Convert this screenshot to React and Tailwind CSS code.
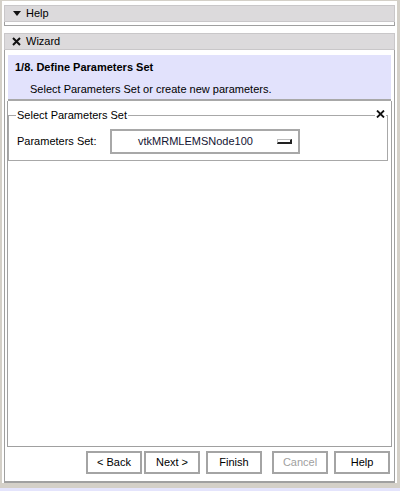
const Btn = ({ children, disabled }) => (
  <button
    disabled={disabled}
    className={`w-[56px] h-[23px] bg-white border-2 border-[#a4a4a4] text-[11px] leading-none ${disabled ? 'text-[#a0a0a0]' : 'text-black'}`}
  >
    {children}
  </button>
)

const Bar = ({ icon, label }) => (
  <div className="h-[17px] bg-[#dcdadc] border border-[#c9c7c9] flex items-center">
    <span className="w-[21px] flex justify-center pl-[2px]">{icon}</span>
    <span className="text-[11px] leading-none text-black">{label}</span>
  </div>
)

export default function App() {
  return (
    <div className="w-[400px] h-[491px] bg-[#d4d0c8] flex flex-col font-['Liberation_Sans',Arial,sans-serif] text-[11px] text-black">
      <div className="flex-1 mt-[1px] ml-[2px] mr-[3px] bg-white px-[2px] pt-[4px] flex flex-col">
        <Bar
          label="Help"
          icon={
            <svg width="8" height="5" viewBox="0 0 8 5"><path d="M0 0h8L4 5z" fill="#111" /></svg>
          }
        />
        <div className="h-[4px] border border-t-0 border-[#a0a0a0] bg-white" />

        <div className="mt-[7px]">
          <Bar
            label="Wizard"
            icon={
              <svg width="9" height="9" viewBox="0 0 9 9">
                <path d="M1 1l7 7M8 1l-7 7" stroke="#111" strokeWidth="2" />
              </svg>
            }
          />
        </div>

        <div className="flex-1 border-x border-b-2 border-[#a0a0a0] flex flex-col px-[2px] pt-[5px] pb-[3px]">
          <div className="mx-[1px] h-[46px] bg-[#e2e2fc] border-b-2 border-[#a8a8a8] pt-[6px] px-[7px]">
            <div className="font-bold leading-[13px]">1/8. Define Parameters Set</div>
            <div className="mt-[9px] pl-[15px] leading-[13px]">Select Parameters Set or create new parameters.</div>
          </div>

          <div className="flex-1 border-x border-b border-[#a0a0a0] flex flex-col">
            <div className="relative mt-[8px] mr-[3px]">
              <fieldset className="border border-[#a8a8a8] px-[8px] pt-[7px] pb-[6px]">
                <legend className="px-[1px] ml-[-1px] leading-[13px]">Select Parameters Set</legend>
                <div className="flex items-center">
                  <span className="w-[93px]">Parameters Set:</span>
                  <div className="w-[190px] h-[25px] border-2 border-[#a8a8a8] flex items-center justify-between pl-[26px] pr-[6px]">
                    <span className="text-[#141432]">vtkMRMLEMSNode100</span>
                    <span className="w-[15px] h-[5px] bg-white border border-b-2 border-r-2 border-[#222] border-l-[#bbb] border-t-[#bbb]" />
                  </div>
                </div>
              </fieldset>
              <span className="absolute right-[2px] top-[1px] bg-white px-[1px]">
                <svg width="9" height="8" viewBox="0 0 9 8">
                  <path d="M1 0.5l7 7M8 0.5l-7 7" stroke="#111" strokeWidth="1.8" />
                </svg>
              </span>
            </div>
          </div>

          <div className="h-[31px] flex items-center justify-end pr-[2px]">
            <div className="flex gap-[2px]">
              <Btn>&lt; Back</Btn>
              <Btn>Next &gt;</Btn>
            </div>
            <div className="ml-[6px]"><Btn>Finish</Btn></div>
            <div className="ml-[10px]"><Btn disabled>Cancel</Btn></div>
            <div className="ml-[6px]"><Btn>Help</Btn></div>
          </div>
        </div>
      </div>
      <div className="h-[5px]" />
      <div className="h-[3px] bg-[#e4e4fc]" />
    </div>
  )
}
